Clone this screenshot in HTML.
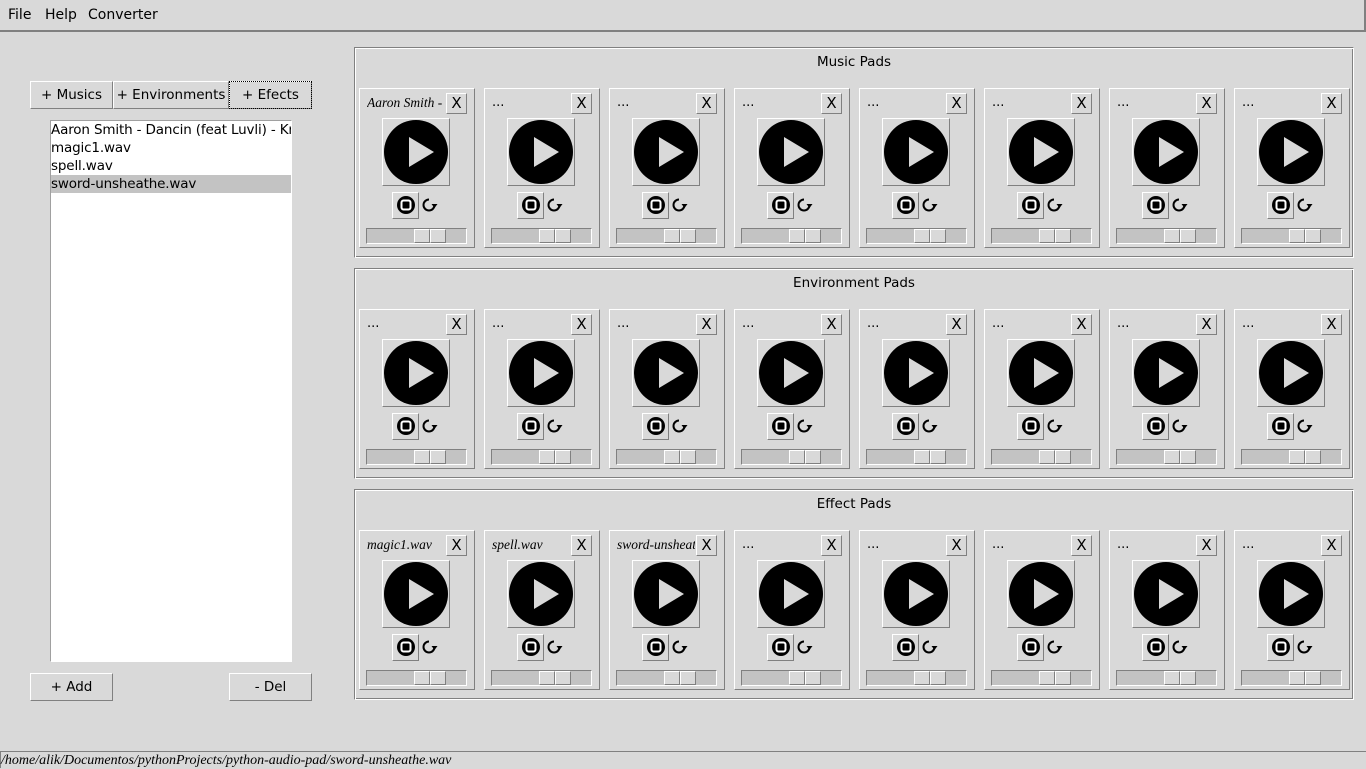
<!DOCTYPE html>
<html><head><meta charset="utf-8"><style>
*{box-sizing:border-box;margin:0;padding:0}
body{width:1366px;height:768px;background:#d9d9d9;font-family:"DejaVu Sans","Liberation Sans",sans-serif;font-size:13.5px;color:#000;position:relative;overflow:hidden}
.abs{position:absolute}
.menu{left:0;top:0;width:1366px;height:32px;border-right:2px solid #808080;border-bottom:2px solid #808080}
.menu span{position:absolute;top:7px;font-size:14px}
.btn{position:absolute;background:#d9d9d9;border:1px solid;border-color:#fff #808080 #808080 #fff;text-align:center}
.list{left:50px;top:120px;width:242px;height:542px;background:#fff;border:1px solid;border-color:#a0a0a0 #fff #fff #a0a0a0}
.list div{height:18px;line-height:18px;padding-left:0;white-space:nowrap;overflow:hidden;letter-spacing:-0.15px}
.frame{position:absolute;left:354px;width:1000px;height:211px;border:1px solid;border-color:#808080 #fff #fff #808080;box-shadow:inset 1px 1px 0 #fff,inset -1px -1px 0 #808080}
.frame .t{position:absolute;top:6px;width:100%;text-align:center}
.pad{position:absolute;width:116px;height:160px;border:1px solid;border-color:#fff #808080 #808080 #fff}
.pad .n{position:absolute;left:7px;top:6px;width:78px;overflow:hidden;white-space:nowrap;font-size:13px}
.pad .i{font-family:"Liberation Serif","DejaVu Serif",serif;font-style:italic;font-size:13.5px;top:6px}
.pad .x{left:86px;top:4px;width:21px;height:21px;line-height:19px;font-size:15px}
.pad .p{left:22px;top:29px;width:68px;height:68px}
.pad .p svg{position:absolute;left:1px;top:1px}
.pad .s{left:32px;top:103px;width:27px;height:27px}
.pad .s svg{position:absolute;left:4px;top:3px}
.pad .r{position:absolute;left:61px;top:107px}
.sl{position:absolute;left:6px;top:139px;width:101px;height:16px;background:#c3c3c3;border:1px solid;border-color:#808080 #fff #fff #808080}
.sl i{position:absolute;top:0;width:16px;height:14px;background:#d9d9d9;border:1px solid;border-color:#fff #808080 #808080 #fff}
.status{left:0;top:751px;width:1366px;height:17px;border-top:1px solid #808080;border-left:1px solid #808080;font-family:"Liberation Serif","DejaVu Serif",serif;font-style:italic;font-size:14px;line-height:17px}
</style></head><body>
<div class="abs menu"><span style="left:8px">File</span><span style="left:45px">Help</span><span style="left:88px">Converter</span></div>
<div class="btn" style="left:30px;top:81px;width:83px;height:28px;line-height:26px">+ Musics</div>
<div class="btn" style="left:113px;top:81px;width:116px;height:28px;line-height:26px">+ Environments</div>
<div class="btn" style="left:229px;top:81px;width:83px;height:28px;line-height:26px;outline:1px dotted #000;outline-offset:-1px">+ Efects</div>
<div class="abs list"><div>Aaron Smith - Dancin (feat Luvli) - Kr</div><div>magic1.wav</div><div>spell.wav</div><div style="background:#c3c3c3">sword-unsheathe.wav</div></div>
<div class="btn" style="left:30px;top:673px;width:83px;height:28px;line-height:26px">+ Add</div>
<div class="btn" style="left:229px;top:673px;width:83px;height:28px;line-height:26px">- Del</div>

<div class="frame" style="top:47px"><div class="t">Music Pads</div></div>
<div class="frame" style="top:268px"><div class="t">Environment Pads</div></div>
<div class="frame" style="top:489px"><div class="t">Effect Pads</div></div>

<svg width="0" height="0" style="position:absolute"><defs>
<g id="play"><circle cx="32" cy="32" r="32" fill="#000"/><path d="M25 17 L50 32 L25 47Z" fill="#d9d9d9"/></g>
<g id="stop"><circle cx="9" cy="9" r="9" fill="#000"/><rect x="4.5" y="4.5" width="9" height="9" rx="2" fill="none" stroke="#fff" stroke-width="2"/></g>
<g id="rep"><path d="M8 3.5 A5.5 5.5 0 1 0 13.5 9" fill="none" stroke="#000" stroke-width="2"/><path d="M10.5 8 L16.5 8 L13.5 12Z" fill="#000"/></g>
</defs></svg>

<div class="pad" style="left:359px;top:88px"><div class="n i">Aaron Smith - </div><div class="btn x">X</div><div class="btn p"><svg width="66" height="66"><use href="#play"/></svg></div><div class="btn s"><svg width="18" height="18"><use href="#stop"/></svg></div><svg class="r" width="18" height="18"><use href="#rep"/></svg><div class="sl"><i style="left:47px"></i><i style="left:63px"></i></div></div>
<div class="pad" style="left:484px;top:88px"><div class="n">...</div><div class="btn x">X</div><div class="btn p"><svg width="66" height="66"><use href="#play"/></svg></div><div class="btn s"><svg width="18" height="18"><use href="#stop"/></svg></div><svg class="r" width="18" height="18"><use href="#rep"/></svg><div class="sl"><i style="left:47px"></i><i style="left:63px"></i></div></div>
<div class="pad" style="left:609px;top:88px"><div class="n">...</div><div class="btn x">X</div><div class="btn p"><svg width="66" height="66"><use href="#play"/></svg></div><div class="btn s"><svg width="18" height="18"><use href="#stop"/></svg></div><svg class="r" width="18" height="18"><use href="#rep"/></svg><div class="sl"><i style="left:47px"></i><i style="left:63px"></i></div></div>
<div class="pad" style="left:734px;top:88px"><div class="n">...</div><div class="btn x">X</div><div class="btn p"><svg width="66" height="66"><use href="#play"/></svg></div><div class="btn s"><svg width="18" height="18"><use href="#stop"/></svg></div><svg class="r" width="18" height="18"><use href="#rep"/></svg><div class="sl"><i style="left:47px"></i><i style="left:63px"></i></div></div>
<div class="pad" style="left:859px;top:88px"><div class="n">...</div><div class="btn x">X</div><div class="btn p"><svg width="66" height="66"><use href="#play"/></svg></div><div class="btn s"><svg width="18" height="18"><use href="#stop"/></svg></div><svg class="r" width="18" height="18"><use href="#rep"/></svg><div class="sl"><i style="left:47px"></i><i style="left:63px"></i></div></div>
<div class="pad" style="left:984px;top:88px"><div class="n">...</div><div class="btn x">X</div><div class="btn p"><svg width="66" height="66"><use href="#play"/></svg></div><div class="btn s"><svg width="18" height="18"><use href="#stop"/></svg></div><svg class="r" width="18" height="18"><use href="#rep"/></svg><div class="sl"><i style="left:47px"></i><i style="left:63px"></i></div></div>
<div class="pad" style="left:1109px;top:88px"><div class="n">...</div><div class="btn x">X</div><div class="btn p"><svg width="66" height="66"><use href="#play"/></svg></div><div class="btn s"><svg width="18" height="18"><use href="#stop"/></svg></div><svg class="r" width="18" height="18"><use href="#rep"/></svg><div class="sl"><i style="left:47px"></i><i style="left:63px"></i></div></div>
<div class="pad" style="left:1234px;top:88px"><div class="n">...</div><div class="btn x">X</div><div class="btn p"><svg width="66" height="66"><use href="#play"/></svg></div><div class="btn s"><svg width="18" height="18"><use href="#stop"/></svg></div><svg class="r" width="18" height="18"><use href="#rep"/></svg><div class="sl"><i style="left:47px"></i><i style="left:63px"></i></div></div>

<div class="pad" style="left:359px;top:309px"><div class="n">...</div><div class="btn x">X</div><div class="btn p"><svg width="66" height="66"><use href="#play"/></svg></div><div class="btn s"><svg width="18" height="18"><use href="#stop"/></svg></div><svg class="r" width="18" height="18"><use href="#rep"/></svg><div class="sl"><i style="left:47px"></i><i style="left:63px"></i></div></div>
<div class="pad" style="left:484px;top:309px"><div class="n">...</div><div class="btn x">X</div><div class="btn p"><svg width="66" height="66"><use href="#play"/></svg></div><div class="btn s"><svg width="18" height="18"><use href="#stop"/></svg></div><svg class="r" width="18" height="18"><use href="#rep"/></svg><div class="sl"><i style="left:47px"></i><i style="left:63px"></i></div></div>
<div class="pad" style="left:609px;top:309px"><div class="n">...</div><div class="btn x">X</div><div class="btn p"><svg width="66" height="66"><use href="#play"/></svg></div><div class="btn s"><svg width="18" height="18"><use href="#stop"/></svg></div><svg class="r" width="18" height="18"><use href="#rep"/></svg><div class="sl"><i style="left:47px"></i><i style="left:63px"></i></div></div>
<div class="pad" style="left:734px;top:309px"><div class="n">...</div><div class="btn x">X</div><div class="btn p"><svg width="66" height="66"><use href="#play"/></svg></div><div class="btn s"><svg width="18" height="18"><use href="#stop"/></svg></div><svg class="r" width="18" height="18"><use href="#rep"/></svg><div class="sl"><i style="left:47px"></i><i style="left:63px"></i></div></div>
<div class="pad" style="left:859px;top:309px"><div class="n">...</div><div class="btn x">X</div><div class="btn p"><svg width="66" height="66"><use href="#play"/></svg></div><div class="btn s"><svg width="18" height="18"><use href="#stop"/></svg></div><svg class="r" width="18" height="18"><use href="#rep"/></svg><div class="sl"><i style="left:47px"></i><i style="left:63px"></i></div></div>
<div class="pad" style="left:984px;top:309px"><div class="n">...</div><div class="btn x">X</div><div class="btn p"><svg width="66" height="66"><use href="#play"/></svg></div><div class="btn s"><svg width="18" height="18"><use href="#stop"/></svg></div><svg class="r" width="18" height="18"><use href="#rep"/></svg><div class="sl"><i style="left:47px"></i><i style="left:63px"></i></div></div>
<div class="pad" style="left:1109px;top:309px"><div class="n">...</div><div class="btn x">X</div><div class="btn p"><svg width="66" height="66"><use href="#play"/></svg></div><div class="btn s"><svg width="18" height="18"><use href="#stop"/></svg></div><svg class="r" width="18" height="18"><use href="#rep"/></svg><div class="sl"><i style="left:47px"></i><i style="left:63px"></i></div></div>
<div class="pad" style="left:1234px;top:309px"><div class="n">...</div><div class="btn x">X</div><div class="btn p"><svg width="66" height="66"><use href="#play"/></svg></div><div class="btn s"><svg width="18" height="18"><use href="#stop"/></svg></div><svg class="r" width="18" height="18"><use href="#rep"/></svg><div class="sl"><i style="left:47px"></i><i style="left:63px"></i></div></div>

<div class="pad" style="left:359px;top:530px"><div class="n i">magic1.wav</div><div class="btn x">X</div><div class="btn p"><svg width="66" height="66"><use href="#play"/></svg></div><div class="btn s"><svg width="18" height="18"><use href="#stop"/></svg></div><svg class="r" width="18" height="18"><use href="#rep"/></svg><div class="sl"><i style="left:47px"></i><i style="left:63px"></i></div></div>
<div class="pad" style="left:484px;top:530px"><div class="n i">spell.wav</div><div class="btn x">X</div><div class="btn p"><svg width="66" height="66"><use href="#play"/></svg></div><div class="btn s"><svg width="18" height="18"><use href="#stop"/></svg></div><svg class="r" width="18" height="18"><use href="#rep"/></svg><div class="sl"><i style="left:47px"></i><i style="left:63px"></i></div></div>
<div class="pad" style="left:609px;top:530px"><div class="n i">sword-unsheathe</div><div class="btn x">X</div><div class="btn p"><svg width="66" height="66"><use href="#play"/></svg></div><div class="btn s"><svg width="18" height="18"><use href="#stop"/></svg></div><svg class="r" width="18" height="18"><use href="#rep"/></svg><div class="sl"><i style="left:47px"></i><i style="left:63px"></i></div></div>
<div class="pad" style="left:734px;top:530px"><div class="n">...</div><div class="btn x">X</div><div class="btn p"><svg width="66" height="66"><use href="#play"/></svg></div><div class="btn s"><svg width="18" height="18"><use href="#stop"/></svg></div><svg class="r" width="18" height="18"><use href="#rep"/></svg><div class="sl"><i style="left:47px"></i><i style="left:63px"></i></div></div>
<div class="pad" style="left:859px;top:530px"><div class="n">...</div><div class="btn x">X</div><div class="btn p"><svg width="66" height="66"><use href="#play"/></svg></div><div class="btn s"><svg width="18" height="18"><use href="#stop"/></svg></div><svg class="r" width="18" height="18"><use href="#rep"/></svg><div class="sl"><i style="left:47px"></i><i style="left:63px"></i></div></div>
<div class="pad" style="left:984px;top:530px"><div class="n">...</div><div class="btn x">X</div><div class="btn p"><svg width="66" height="66"><use href="#play"/></svg></div><div class="btn s"><svg width="18" height="18"><use href="#stop"/></svg></div><svg class="r" width="18" height="18"><use href="#rep"/></svg><div class="sl"><i style="left:47px"></i><i style="left:63px"></i></div></div>
<div class="pad" style="left:1109px;top:530px"><div class="n">...</div><div class="btn x">X</div><div class="btn p"><svg width="66" height="66"><use href="#play"/></svg></div><div class="btn s"><svg width="18" height="18"><use href="#stop"/></svg></div><svg class="r" width="18" height="18"><use href="#rep"/></svg><div class="sl"><i style="left:47px"></i><i style="left:63px"></i></div></div>
<div class="pad" style="left:1234px;top:530px"><div class="n">...</div><div class="btn x">X</div><div class="btn p"><svg width="66" height="66"><use href="#play"/></svg></div><div class="btn s"><svg width="18" height="18"><use href="#stop"/></svg></div><svg class="r" width="18" height="18"><use href="#rep"/></svg><div class="sl"><i style="left:47px"></i><i style="left:63px"></i></div></div>

<div class="abs status">/home/alik/Documentos/pythonProjects/python-audio-pad/sword-unsheathe.wav</div>
</body></html>
